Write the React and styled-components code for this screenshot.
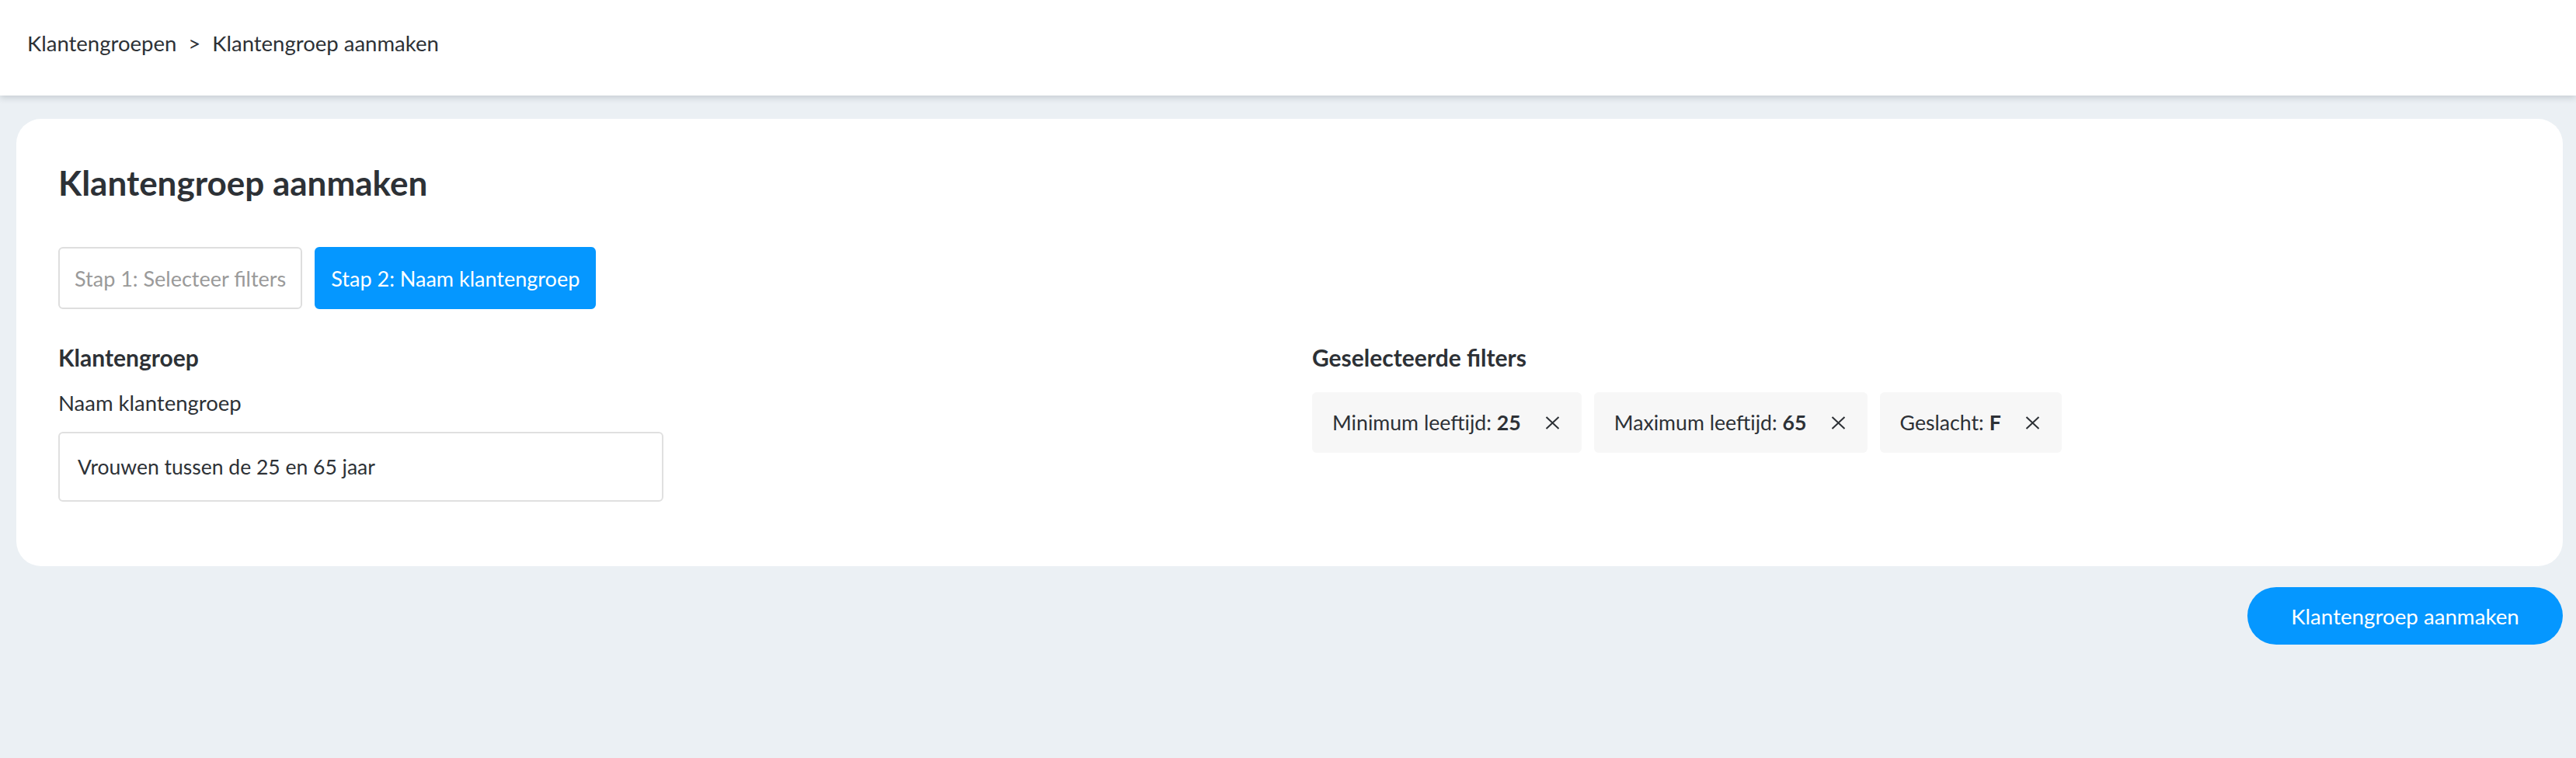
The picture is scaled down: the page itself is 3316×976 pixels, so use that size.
import React from "react";
import styled, { createGlobalStyle } from "styled-components";

const GlobalStyle = createGlobalStyle`
	body {
		margin: 0;
		font-family: Lato, "Noto Sans", sans-serif;
		color: #2d3136;
		background: #ebf0f4;
	}
`;

const Page = styled.div`
	min-height: 976px;
	background: #ebf0f4;
`;

const Header = styled.header`
	height: 123px;
	background: #ffffff;
	box-shadow: 0 3px 8px rgba(40, 50, 60, 0.18);
	display: flex;
	align-items: center;
	padding-left: 35px;
	position: relative;
`;

const Breadcrumb = styled.nav`
	font-size: 27.5px;
	display: flex;
	gap: 15px;
	margin-top: -12px;
`;

const Main = styled.main`
	padding: 30px 17px 0 21px;
`;

const Card = styled.section`
	background: #ffffff;
	border-radius: 32px;
	padding: 52px 54px 83px 54px;
`;

const Title = styled.h1`
	margin: 0;
	font-size: 44px;
	font-weight: 700;
	line-height: 60px;
`;

const Steps = styled.div`
	display: flex;
	gap: 16px;
	margin-top: 53px;
`;

const Step = styled.div`
	height: 80px;
	box-sizing: border-box;
	display: flex;
	align-items: center;
	padding: 0 19px;
	font-size: 27px;
	border-radius: 6px;
	border: 2px solid ${(p) => (p.$active ? "#0597ff" : "#dedede")};
	background: ${(p) => (p.$active ? "#0597ff" : "#ffffff")};
	color: ${(p) => (p.$active ? "#ffffff" : "#9a9a9a")};
`;

const Columns = styled.div`
	display: grid;
	grid-template-columns: 1fr 1fr;
	column-gap: 58px;
	margin-top: 42px;
`;

const SectionTitle = styled.h2`
	margin: 0;
	font-size: 30px;
	font-weight: 700;
	line-height: 40px;
`;

const Label = styled.label`
	display: block;
	margin-top: 22px;
	font-size: 27.5px;
	line-height: 34px;
`;

const Input = styled.div`
	margin-top: 20px;
	width: 779px;
	height: 90px;
	box-sizing: border-box;
	border: 2px solid #e0e0e0;
	border-radius: 6px;
	display: flex;
	align-items: center;
	padding-left: 23px;
	font-size: 26.5px;
`;

const Chips = styled.div`
	display: flex;
	gap: 16px;
	margin-top: 25px;
`;

const Chip = styled.div`
	height: 78px;
	display: flex;
	align-items: center;
	gap: 31px;
	padding: 0 28px 0 26px;
	background: #f7f7f7;
	border-radius: 6px;
	font-size: 26.7px;
`;

const Footer = styled.div`
	display: flex;
	justify-content: flex-end;
	margin-top: 27px;
`;

const PrimaryButton = styled.button`
	height: 74px;
	width: 406px;
	border: none;
	border-radius: 37px;
	background: #0597ff;
	color: #ffffff;
	font-family: inherit;
	font-size: 27.7px;
`;

const Close = () => (
	<svg width="19" height="17" viewBox="0 0 19 17" fill="none">
		<path d="M1.5 1L17.5 16M17.5 1L1.5 16" stroke="#2d3136" strokeWidth="2" />
	</svg>
);

const filters = [
	["Minimum leeftijd: ", "25"],
	["Maximum leeftijd: ", "65"],
	["Geslacht: ", "F"],
];

const App = () => (
	<Page>
		<GlobalStyle />
		<Header>
			<Breadcrumb>
				<span>Klantengroepen</span>
				<span>&gt;</span>
				<span>Klantengroep aanmaken</span>
			</Breadcrumb>
		</Header>
		<Main>
			<Card>
				<Title>Klantengroep aanmaken</Title>
				<Steps>
					<Step>Stap 1: Selecteer filters</Step>
					<Step $active>Stap 2: Naam klantengroep</Step>
				</Steps>
				<Columns>
					<div>
						<SectionTitle>Klantengroep</SectionTitle>
						<Label>Naam klantengroep</Label>
						<Input>Vrouwen tussen de 25 en 65 jaar</Input>
					</div>
					<div>
						<SectionTitle>Geselecteerde filters</SectionTitle>
						<Chips>
							{filters.map(([label, value]) => (
								<Chip key={label}>
									<span>
										{label}
										<b>{value}</b>
									</span>
									<Close />
								</Chip>
							))}
						</Chips>
					</div>
				</Columns>
			</Card>
			<Footer>
				<PrimaryButton>Klantengroep aanmaken</PrimaryButton>
			</Footer>
		</Main>
	</Page>
);

export default App;
